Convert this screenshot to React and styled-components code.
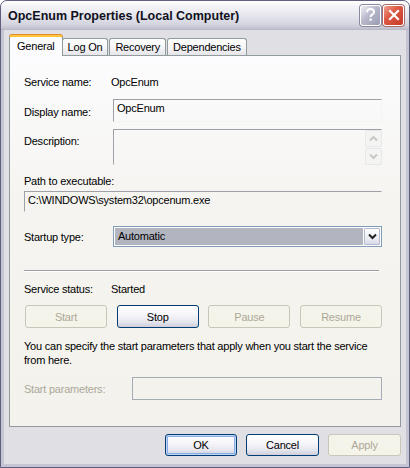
import React from "react";
import styled, { createGlobalStyle } from "styled-components";

const Global = createGlobalStyle`
  html, body { margin: 0; padding: 0; background: #fff; }
  body { font-family: "Liberation Sans", Arial, sans-serif; font-size: 11px; letter-spacing: -0.22px; color: #000; }
  * { box-sizing: border-box; }
`;

const Window = styled.div`
  width: 410px;
  height: 468px;
  display: flex;
  flex-direction: column;
  background: #c4c4d2;
  border: 1px solid #5d5f7d;
  border-radius: 7px 7px 0 0;
  overflow: hidden;
`;

const TitleBar = styled.div`
  height: 29px;
  flex: none;
  display: flex;
  align-items: center;
  padding: 0 5px 0 7px;
  background: linear-gradient(#ffffff 0%, #f3f3f7 20%, #e4e4ec 55%, #d3d3de 85%, #c0c0ce 100%);
  border-bottom: 1px solid #b8b8c8;
`;

const Title = styled.div`
  flex: 1;
  font-family: "Liberation Sans", Arial, sans-serif;
  font-weight: bold;
  font-size: 12.5px;
  color: #101020;
  letter-spacing: 0;
  padding-top: 1px;
`;

const CaptionButton = styled.div`
  width: 21px;
  height: 21px;
  margin-left: 2px;
  border: 1px solid #fff;
  border-radius: 3px;
  display: flex;
  align-items: center;
  justify-content: center;
  background: ${(p) =>
    p.$close
      ? "linear-gradient(135deg, #f0a090 0%, #dd5a44 40%, #c43a28 100%)"
      : "linear-gradient(135deg, #eeeef6 0%, #b8b8cc 45%, #9a9ab2 100%)"};
  box-shadow: 0 0 0 1px ${(p) => (p.$close ? "#a86a6a" : "#8a8aa0")};
`;

const Frame = styled.div`
  flex: 1;
  display: flex;
  flex-direction: column;
  margin: 0 3px 3px 3px;
  background: #e0dfe3;
  padding: 3px 5px 0 5px;
  border-top: 1px solid #e0dfe3;
`;

const TabRow = styled.div`
  display: flex;
  align-items: flex-end;
  height: 21px;
  padding-left: 1px;
  position: relative;
  z-index: 1;
`;

const Tab = styled.div`
  height: ${(p) => (p.$active ? "21px" : "17px")};
  margin: ${(p) => (p.$active ? "0 -1px -1px -1px" : "0 1px 0 0")};
  padding: ${(p) => (p.$active ? "3px 7px 0 7px" : "2px 5px 0 5px")};
  border: 1px solid #919b9c;
  border-bottom: none;
  border-top: ${(p) => (p.$active ? "2px solid #ffc83c" : "1px solid #919b9c")};
  border-radius: 3px 3px 0 0;
  background: ${(p) =>
    p.$active ? "#fcfcfe" : "linear-gradient(#ffffff, #f4f4f6 60%, #e4e4ea)"};
  box-shadow: ${(p) => (p.$active ? "0 -1px 0 #e68b2c" : "none")};
  white-space: nowrap;
  line-height: 13px;
  position: relative;
  z-index: ${(p) => (p.$active ? 2 : 1)};
`;

const Panel = styled.div`
  height: 372px;
  border: 1px solid #919b9c;
  background: linear-gradient(#fcfcfe, #f5f4f0 40%, #f3f2ec);
  padding: 0 18px 0 14px;
  display: flex;
  flex-direction: column;
`;

const Row = styled.div`
  display: flex;
  align-items: ${(p) => (p.$top ? "flex-start" : "center")};
  margin-top: ${(p) => p.$mt || 0}px;
`;

const Label = styled.div`
  width: ${(p) => p.$w || 87}px;
  flex: none;
  color: ${(p) => (p.$disabled ? "#aca899" : "#000")};
  padding-top: ${(p) => p.$pt || 0}px;
  line-height: 14px;
`;

const Value = styled.div`
  line-height: 14px;
`;

const Edit = styled.div`
  flex: 1;
  height: ${(p) => p.$h}px;
  border-top: 1px solid #a0a0a8;
  border-left: 1px solid #a0a0a8;
  border-right: 1px solid #f4f4f4;
  border-bottom: 1px solid #f4f4f4;
  padding: ${(p) => (p.$scroll ? "1px 0 0 3px" : "1px 3px 0 3px")};
  line-height: 14px;
  margin-left: ${(p) => p.$ml || 0}px;
  display: flex;
  align-items: flex-start;
  justify-content: space-between;
  white-space: nowrap;
`;

const BoxedEdit = styled.div`
  flex: 1;
  height: 23px;
  border: 1px solid #a5acb5;
  margin-left: ${(p) => p.$ml || 0}px;
`;

const ScrollCol = styled.div`
  display: flex;
  flex-direction: column;
  gap: 1px;
  margin-top: -1px;
  margin-right: -1px;
`;

const ScrollBtn = styled.div`
  width: 17px;
  height: 17px;
  border: 1px solid #e8e8ea;
  border-radius: 2px;
  background: #f4f4f2;
  display: flex;
  align-items: center;
  justify-content: center;
`;

const Select = styled.div`
  flex: 1;
  height: 21px;
  margin-left: 2px;
  border: 1px solid #7f9db9;
  padding: 1px;
  display: flex;
  background: #fff;
`;

const SelectText = styled.div`
  flex: 1;
  background: #b2b4bf;
  padding-left: 3px;
  line-height: 17px;
`;

const DropBtn = styled.div`
  width: 16px;
  margin-left: 1px;
  border: 1px solid #b4b8cc;
  border-radius: 1px;
  background: linear-gradient(#ffffff, #eceef6 60%, #d8dae8);
  display: flex;
  align-items: center;
  justify-content: center;
`;

const Separator = styled.div`
  margin-top: ${(p) => p.$mt}px;
  height: 2px;
  border-top: 1px solid #a0a0a4;
  border-bottom: 1px solid #ffffff;
  margin-right: 3px;
`;

const ButtonRow = styled.div`
  display: flex;
  justify-content: space-between;
  margin-top: ${(p) => p.$mt || 0}px;
  padding-left: ${(p) => p.$pl || 0}px;
`;

const Button = styled.div`
  width: ${(p) => p.$w || 82}px;
  height: ${(p) => p.$h || 23}px;
  border-radius: 3px;
  display: flex;
  align-items: center;
  justify-content: center;
  border: 1px solid ${(p) => (p.$disabled ? "#c9c7ba" : "#003c74")};
  color: ${(p) => (p.$disabled ? "#aca899" : "#000")};
  background: ${(p) =>
    p.$disabled
      ? "#f5f4ea"
      : "linear-gradient(#ffffff 0%, #f6f6fa 40%, #e6e6ee 75%, #cfcfdd 100%)"};
  box-shadow: ${(p) =>
    p.$default
      ? "inset 0 0 0 1px #bcd4f6, inset 0 0 0 2px #89ade4"
      : "none"};
`;

const Para = styled.div`
  margin-top: ${(p) => p.$mt}px;
  line-height: 14px;
`;

const Footer = styled.div`
  display: flex;
  justify-content: flex-end;
  gap: 9px;
  margin-top: 7px;
`;

const Chevron = ({ up, color = "#222", size = 9 }) => (
  <svg width={size} height={size - 2} viewBox="0 0 9 7">
    <path
      d={up ? "M1 5.5 L4.5 2 L8 5.5" : "M1 1.5 L4.5 5 L8 1.5"}
      fill="none"
      stroke={color}
      strokeWidth="2"
    />
  </svg>
);

export default function App() {
  return (
    <>
      <Global />
      <Window>
        <TitleBar>
          <Title>OpcEnum Properties (Local Computer)</Title>
          <CaptionButton>
            <svg width="11" height="14" viewBox="0 0 11 14">
              <path
                d="M2 4.2 C2 1.8 3.8 1 5.5 1 C7.4 1 9 2 9 3.9 C9 5.6 7.6 6.2 6.6 7 C5.8 7.6 5.6 8 5.6 9"
                fill="none"
                stroke="#fff"
                strokeWidth="2"
              />
              <rect x="4.5" y="10.5" width="2.3" height="2.3" fill="#fff" />
            </svg>
          </CaptionButton>
          <CaptionButton $close>
            <svg width="12" height="12" viewBox="0 0 12 12">
              <path d="M2 2 L10 10 M10 2 L2 10" stroke="#fff" strokeWidth="2.2" strokeLinecap="square" />
            </svg>
          </CaptionButton>
        </TitleBar>
        <Frame>
          <TabRow>
            <Tab $active>General</Tab>
            <Tab>Log On</Tab>
            <Tab>Recovery</Tab>
            <Tab>Dependencies</Tab>
          </TabRow>
          <Panel>
            <Row $mt={19}>
              <Label>Service name:</Label>
              <Value>OpcEnum</Value>
            </Row>
            <Row $mt={10}>
              <Label $pt={2}>Display name:</Label>
              <Edit $h={23} $ml={2}>OpcEnum</Edit>
            </Row>
            <Row $mt={7} $top>
              <Label $pt={5}>Description:</Label>
              <Edit $h={36} $ml={2} $scroll>
                <span />
                <ScrollCol>
                  <ScrollBtn>
                    <Chevron up color="#c8c8c4" />
                  </ScrollBtn>
                  <ScrollBtn>
                    <Chevron color="#c8c8c4" />
                  </ScrollBtn>
                </ScrollCol>
              </Edit>
            </Row>
            <Para $mt={9}>Path to executable:</Para>
            <Row $mt={3}>
              <Edit $h={21}>C:\WINDOWS\system32\opcenum.exe</Edit>
            </Row>
            <Row $mt={14}>
              <Label>Startup type:</Label>
              <Select>
                <SelectText>Automatic</SelectText>
                <DropBtn>
                  <Chevron />
                </DropBtn>
              </Select>
            </Row>
            <Separator $mt={23} />
            <Row $mt={10}>
              <Label>Service status:</Label>
              <Value>Started</Value>
            </Row>
            <ButtonRow $mt={9} $pl={1}>
              <Button $disabled>Start</Button>
              <Button>Stop</Button>
              <Button $disabled>Pause</Button>
              <Button $disabled>Resume</Button>
            </ButtonRow>
            <Para $mt={11}>
              You can specify the start parameters that apply when you start the service
              <br />
              from here.
            </Para>
            <Row $mt={10}>
              <Label $w={108} $disabled>
                Start parameters:
              </Label>
              <BoxedEdit />
            </Row>
          </Panel>
          <Footer>
            <Button $w={72} $h={22} $default>
              OK
            </Button>
            <Button $w={73} $h={22}>
              Cancel
            </Button>
            <Button $w={73} $h={22} $disabled>
              Apply
            </Button>
          </Footer>
        </Frame>
      </Window>
    </>
  );
}
